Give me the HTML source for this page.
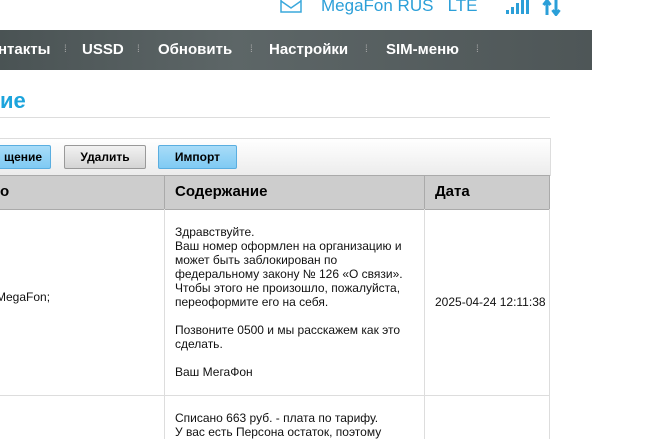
<html><head><style>
body{margin:0;width:670px;height:431px;overflow:hidden;background:#fff;font-family:"Liberation Sans",Arial,sans-serif;position:relative}
.a{position:absolute}
.nav{left:0;top:30px;width:592px;height:40px;background:linear-gradient(90deg,#4a5354,#5d6667 40%,#4e5657);color:#fff;font-weight:bold;font-size:15px}
.nav span{position:absolute;top:11px}
.sep{color:#aaa;font-size:10px;top:14px!important;font-weight:normal}
.btn{position:absolute;top:145px;height:22px;border:1px solid #999;font-size:12px;font-weight:bold;line-height:22px;text-align:center;border-radius:2px}
.blue{background:linear-gradient(#a8dcf8,#7fcaf3);border-color:#5aaee0}
.grey{background:linear-gradient(#f2f2f2,#d4d4d4)}
.t{font-size:12px;line-height:14px;color:#111}
</style></head><body>
<svg class="a" style="left:280px;top:0" width="22" height="14"><path d="M1 0V12H21V0M1 1L11 8L21 1" fill="none" stroke="#3aa8dc" stroke-width="1.5"/></svg>
<div class="a" style="left:321px;top:-4px;color:#2b9fd8;font-size:17px">MegaFon RUS&nbsp;&nbsp; LTE</div>
<svg class="a" style="left:506px;top:0" width="60" height="16"><rect x="0" y="10" width="3" height="4" fill="#2b9fd8"/><rect x="5" y="7" width="3" height="7" fill="#2b9fd8"/><rect x="10" y="3" width="3" height="11" fill="#2b9fd8"/><rect x="15" y="0" width="3" height="14" fill="#2b9fd8"/><rect x="20" y="0" width="3" height="14" fill="#2b9fd8"/><path d="M41 15V1M37.5 5L41 0.5L44.5 5M50 0V14M46.5 10L50 14.5L53.5 10" stroke="#2b9fd8" stroke-width="3" fill="none"/></svg>
<div class="a nav"><span style="left:-2px">нтакты</span><span class="sep" style="left:64px">⁞</span><span style="left:82px">USSD</span><span class="sep" style="left:137px">⁞</span><span style="left:158px">Обновить</span><span class="sep" style="left:250px">⁞</span><span style="left:269px">Настройки</span><span class="sep" style="left:365px">⁞</span><span style="left:386px">SIM-меню</span><span class="sep" style="left:476px">⁞</span></div>
<div class="a" style="left:0;top:88px;color:#1ca4dc;font-size:22px;font-weight:bold">ие</div>
<div class="a" style="left:0;top:117px;width:550px;height:1px;background:#ddd"></div>
<div class="a" style="left:-1px;top:138px;width:550px;height:36px;border:1px solid #ddd;background:linear-gradient(#fff,#ececec)"></div>
<div class="btn blue" style="left:-5px;width:54px">щение</div>
<div class="btn grey" style="left:64px;width:80px">Удалить</div>
<div class="btn blue" style="left:158px;width:77px">Импорт</div>
<div class="a" style="left:0;top:175px;width:549px;height:33px;background:#cdcdcd;border:1px solid #aaa;border-left:0"></div>
<div class="a" style="left:164px;top:175px;width:1px;height:34px;background:#aaa"></div>
<div class="a" style="left:424px;top:175px;width:1px;height:34px;background:#aaa"></div>
<div class="a" style="left:0;top:183px;font-size:15px;font-weight:bold">о</div>
<div class="a" style="left:175px;top:183px;font-size:15px;font-weight:bold">Содержание</div>
<div class="a" style="left:435px;top:183px;font-size:15px;font-weight:bold">Дата</div>
<div class="a" style="left:164px;top:209px;width:1px;height:230px;background:#ddd"></div>
<div class="a" style="left:424px;top:209px;width:1px;height:230px;background:#ddd"></div>
<div class="a" style="left:549px;top:209px;width:1px;height:230px;background:#ddd"></div>
<div class="a" style="left:0;top:395px;width:550px;height:1px;background:#ddd"></div>
<div class="a t" style="left:-4px;top:290px">MegaFon;</div>
<div class="a t" style="left:175px;top:225px">Здравствуйте.<br>Ваш номер оформлен на организацию и<br>может быть заблокирован по<br>федеральному закону № 126 «О связи».<br>Чтобы этого не произошло, пожалуйста,<br>переоформите его на себя.<br><br>Позвоните 0500 и мы расскажем как это<br>сделать.<br><br>Ваш МегаФон</div>
<div class="a t" style="left:435px;top:295px">2025-04-24 12:11:38</div>
<div class="a t" style="left:175px;top:411px">Списано 663 руб. - плата по тарифу.<br>У вас есть Персона остаток, поэтому</div>
</body></html>
